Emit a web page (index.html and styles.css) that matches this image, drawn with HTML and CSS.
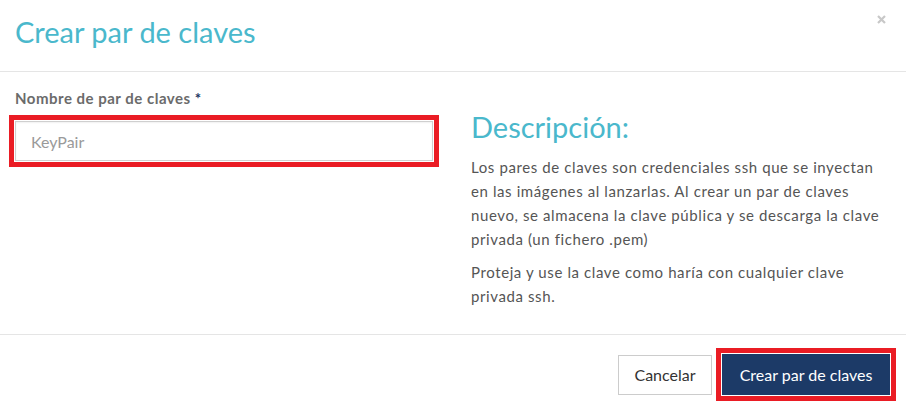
FILE: index.html
```html
<!DOCTYPE html>
<html lang="es">
<head>
<meta charset="utf-8">
<title>Crear par de claves</title>
<link rel="stylesheet" href="styles.css">
</head>
<body>
<div class="modal">
  <div class="modal-header">
    <h1 class="modal-title">Crear par de claves</h1>
    <button class="close" type="button" aria-label="Cerrar">
      <svg width="9" height="9" viewBox="0 0 9 9"><path d="M1 1L8 8M8 1L1 8" stroke="#c8c8c8" stroke-width="2.2" stroke-linecap="butt"/></svg>
    </button>
  </div>
  <div class="modal-body">
    <div class="col-left">
      <label class="field-label" for="kp">Nombre de par de claves <span class="req">*</span></label>
      <input id="kp" class="field-input" type="text" placeholder="KeyPair">
    </div>
    <div class="col-right">
      <h2 class="desc-title">Descripción:</h2>
      <p class="desc-text">Los pares de claves son credenciales ssh que se inyectan en las imágenes al lanzarlas. Al crear un par de claves nuevo, se almacena la clave pública y se descarga la clave privada (un fichero .pem)</p>
      <p class="desc-text">Proteja y use la clave como haría con cualquier clave privada ssh.</p>
    </div>
  </div>
  <div class="modal-footer">
    <button class="btn btn-default" type="button">Cancelar</button>
    <button class="btn btn-primary" type="button">Crear par de claves</button>
  </div>
</div>
</body>
</html>
```

FILE: styles.css
```css
* { box-sizing: border-box; }
html, body { margin: 0; padding: 0; background: #fff; }
body { font-family: Lato, "Noto Sans", sans-serif; color: #555; }

.modal { width: 906px; height: 409px; background: #fff; }

.modal-header {
  height: 72px;
  border-bottom: 1px solid #e5e5e5;
  display: flex;
  justify-content: space-between;
  align-items: flex-start;
  padding: 0 16px 0 15px;
}
.modal-title {
  margin: 0;
  padding-top: 13px;
  font-size: 29px;
  line-height: 38px;
  font-weight: 400;
  color: #4ab8cc;
}
.close {
  margin-top: 15px;
  border: 0;
  background: none;
  padding: 0 4px 0 0;
  line-height: 0;
  cursor: pointer;
}

.modal-body {
  height: 262px;
  display: grid;
  grid-template-columns: 418px 416px;
  column-gap: 38px;
  padding: 16px 0 0 15px;
}
.field-label {
  display: block;
  font-size: 15px;
  line-height: 20px;
  font-weight: 700;
  letter-spacing: 0.5px;
  color: #6b6b6b;
  margin-bottom: 13px;
}
.req { color: #1a3461; }
.field-input {
  display: block;
  width: 418px;
  height: 40px;
  border: 1px solid #cfcfcf;
  box-shadow: inset 0 1px 2px rgba(0,0,0,0.06);
  padding: 0 15px;
  font-family: inherit;
  font-size: 16px;
  color: #555;
  outline: 5px solid #ea1c24;
  outline-offset: 1px;
}
.field-input::placeholder { color: #9a9a9a; }

.col-right { padding-top: 22px; }
.desc-title {
  margin: 0 0 11px 0;
  font-size: 29px;
  line-height: 34px;
  font-weight: 400;
  color: #4ab8cc;
}
.desc-text {
  margin: 0 0 9px 0;
  font-size: 15px;
  line-height: 24px;
  letter-spacing: 0.6px;
  color: #555;
}

.modal-footer {
  border-top: 1px solid #e5e5e5;
  display: flex;
  justify-content: flex-end;
  align-items: center;
  gap: 10px;
  padding: 19px 16px 0 0;
}
.btn {
  font-family: inherit;
  font-size: 16px;
  height: 41px;
  padding: 0 15px;
  cursor: pointer;
}
.btn-default {
  background: #fff;
  border: 1px solid #cccccc;
  color: #333;
  width: 94px;
  height: 40px;
}
.btn-primary {
  background: #1c3a67;
  border: 1px solid #1c3a67;
  color: #fff;
  width: 168px;
  outline: 5px solid #ea1c24;
  outline-offset: 1px;
}
```
